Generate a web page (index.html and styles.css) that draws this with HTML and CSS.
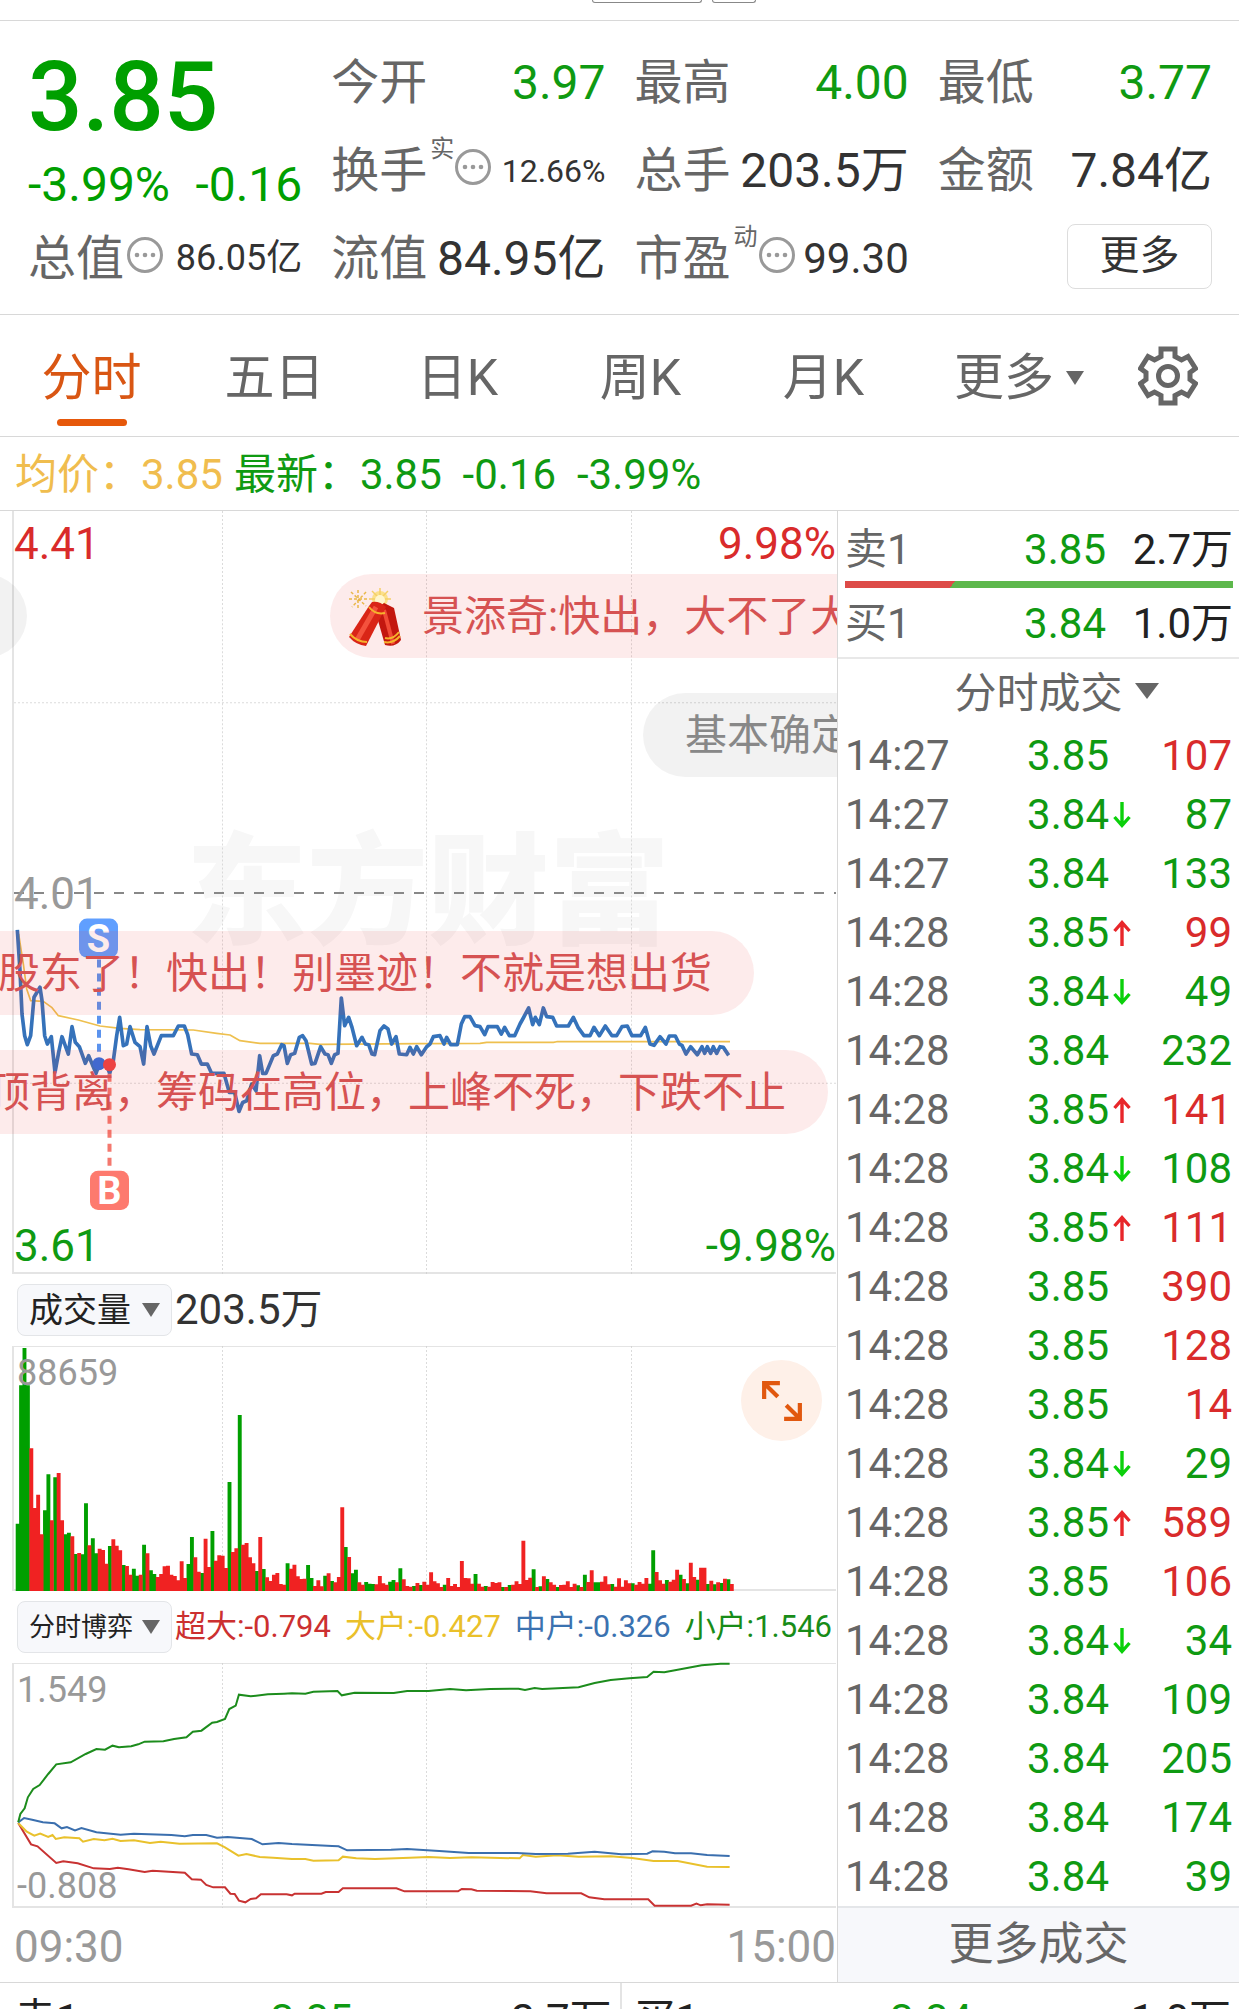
FILE: index.html
```html
<!DOCTYPE html>
<html lang="zh-CN">
<head>
<meta charset="utf-8">
<meta name="viewport" content="width=device-width, initial-scale=1">
<title>分时行情</title>
<link rel="stylesheet" href="styles.css">
</head>
<body>
<svg class="defs" aria-hidden="true">
  <symbol id="dots" viewBox="0 0 36 36"><circle cx="18" cy="18" r="16.5" fill="none" stroke="#999" stroke-width="3"/><g fill="#999"><circle cx="10" cy="18" r="2.3"/><circle cx="18" cy="18" r="2.3"/><circle cx="26" cy="18" r="2.3"/></g></symbol>
  <symbol id="down" viewBox="0 0 18 28"><path d="M9 1V24M1.500 16L9 24.500L16.500 16" fill="none" stroke="#0bd00b" stroke-width="3.400"/></symbol>
  <symbol id="up" viewBox="0 0 18 28"><path d="M9 27V4M1.500 12L9 3.500L16.500 12" fill="none" stroke="#e8262a" stroke-width="3.400"/></symbol>
</svg>

<div class="topbar"><span class="chip chip-wide"></span><span class="chip"></span></div>

<header class="quote">
  <div class="price-box">
    <strong class="price">3.85</strong>
    <div class="change"><span>-3.99%</span><span>-0.16</span></div>
  </div>
  <div class="stat"><span class="label">今开</span><span class="green">3.97</span></div>
  <div class="stat"><span class="label">最高</span><span class="green">4.00</span></div>
  <div class="stat"><span class="label">最低</span><span class="green">3.77</span></div>
  <div class="stat"><span class="label">换手<small>实</small><svg class="info"><use href="#dots"/></svg></span><span class="v-small">12.66%</span></div>
  <div class="stat"><span class="label">总手</span><span>203.5万</span></div>
  <div class="stat"><span class="label">金额</span><span>7.84亿</span></div>
  <div class="stat"><span class="label">总值<svg class="info info-gap"><use href="#dots"/></svg></span><span class="v-mid">86.05亿</span></div>
  <div class="stat"><span class="label">流值</span><span>84.95亿</span></div>
  <div class="stat"><span class="label">市盈<small>动</small><svg class="info"><use href="#dots"/></svg></span><span class="v-large">99.30</span></div>
  <div class="stat stat-end"><button class="more" type="button">更多</button></div>
</header>

<nav class="tabs">
  <button class="tab active" type="button">分时</button>
  <button class="tab" type="button">五日</button>
  <button class="tab" type="button">日K</button>
  <button class="tab" type="button">周K</button>
  <button class="tab" type="button">月K</button>
  <button class="tab" type="button">更多<svg class="caret" viewBox="0 0 18 14"><path d="M0 0H18L9 14Z"/></svg></button>
  <button class="tab tab-icon" type="button" aria-label="设置"><svg class="gear" viewBox="0 0 60 60"><path d="M23 3H37V10.500L43.500 14L50 10.500L57.500 22.500L52 26.500V33.500L57.500 37.500L50 49.500L43.500 46L37 49.500V57H23V49.500L16.500 46L10 49.500L2.500 37.500L8 33.500V26.500L2.500 22.500L10 10.500L16.500 14L23 10.500Z"/><circle cx="30" cy="30" r="9.500"/></svg></button>
</nav>

<p class="latest"><span class="avg">均价：3.85</span><span>最新：3.85&nbsp; -0.16&nbsp; -3.99%</span></p>

<main class="board">
  <section class="charts">
    <div class="plot plot-price">
      <div class="watermark">东方财富</div>
      <svg class="canvas" viewBox="0 0 822 762" preserveAspectRatio="none">
        <g class="grid"><path d="M208.500 0V762M412.500 0V762M617.500 0V762M0 191.500H822M0 571.500H822"/></g>
        <path class="mid" d="M0 381.500H822"/>
        <g transform="translate(-14 369) scale(.33333)" fill="none" stroke-linejoin="round">
          <polyline stroke="#eec04f" stroke-width="5" points="56,160 62,200 70,250 80,325 92,360 130,362 155,380 175,405 235,418 300,436 360,443 420,447 580,448 650,458 690,463 720,480 780,488 930,488 960,491 1260,489 1440,488 1460,485 1660,485 1670,483 2190,483"/>
          <polyline stroke="#3572ba" stroke-width="11" points="52,148 60,270 66,400 74,465 82,492 92,465 102,350 120,320 126,360 134,465 142,490 154,468 165,575 176,515 186,468 205,520 216,438 226,485 238,498 256,548 266,525 288,578 298,550 318,548 329,578 340,540 350,465 359,410 370,495 380,490 390,438 405,485 420,498 431,550 441,438 452,495 462,520 484,465 520,465 535,436 553,436 563,462 575,520 592,522 604,550 622,550 635,578 672,578 688,635 704,635 717,692 728,665 740,660 755,610 768,630 779,525 788,578 798,578 820,525 832,520 845,492 852,495 862,548 872,522 884,518 898,470 908,465 918,480 935,550 945,548 962,498 975,520 984,522 994,548 1004,522 1014,518 1024,352 1034,435 1046,410 1056,440 1070,495 1086,470 1096,490 1106,492 1116,520 1124,522 1140,450 1152,436 1164,445 1175,490 1188,468 1198,520 1220,522 1230,500 1240,520 1250,498 1264,522 1280,498 1290,490 1300,468 1320,465 1332,490 1340,470 1352,492 1372,492 1384,430 1394,408 1410,408 1425,435 1440,438 1454,462 1464,438 1492,438 1504,460 1514,440 1528,465 1544,465 1560,430 1570,412 1586,382 1598,432 1606,410 1618,432 1630,382 1640,408 1658,410 1670,436 1705,436 1720,410 1734,440 1752,465 1770,465 1782,440 1798,465 1816,436 1836,465 1850,465 1866,438 1882,436 1896,465 1922,465 1936,440 1950,490 1962,494 1980,468 1998,490 2008,466 2026,466 2038,490 2046,494 2058,520 2072,498 2092,522 2106,498 2114,518 2122,498 2132,518 2140,498 2150,518 2160,498 2170,500 2186,524"/>
        </g>
        <path d="M85 448V545" stroke="#5b93ee" stroke-width="4" stroke-dasharray="8 6"/>
        <path d="M95.500 562V658" stroke="#f4786e" stroke-width="4" stroke-dasharray="8 6"/>
        <circle cx="85" cy="552" r="6.500" fill="#2f6fe0"/>
        <circle cx="95.500" cy="553" r="6.500" fill="#ee4444"/>
        <rect x="65" y="407" width="39" height="39" rx="8" fill="#609fff"/>
        <rect x="76" y="659" width="39" height="39" rx="8" fill="#fd7a6e"/>
        <g class="mark"><text x="84.500" y="440">S</text><text x="95.500" y="692">B</text></g>
      </svg>
      <span class="tag tag-top">4.41</span>
      <span class="tag tag-top tag-right">9.98%</span>
      <span class="tag tag-mid">4.01</span>
      <span class="tag tag-bottom">3.61</span>
      <span class="tag tag-bottom tag-right">-9.98%</span>
      <div class="bubble lane-1 grey off-left"></div>
      <div class="bubble lane-1 from-1">
        <svg class="cracker" viewBox="0 0 54 60">
          <g stroke="#e9b84a" stroke-width="1.500" stroke-dasharray="3 2"><path d="M10 2V20M1 11H21M3 4L18 18M18 4L4 19"/></g>
          <circle cx="32" cy="11" r="8" fill="#fbe08a"/><path d="M32 0V22M21 11H43M24 3L40 19M40 3L24 19" stroke="#f5d067" stroke-width="1.500"/><circle cx="32" cy="12" r="5" fill="#fff6cd"/>
          <path d="M36 15L46 20L53 52Q47 60 37 57L27 22Z" fill="#c3170f"/><path d="M36 22L45 56" stroke="#f14a36" stroke-width="4"/>
          <path d="M24 14Q32 13 38 19L18 58Q8 57 1 49L21 18Z" fill="#d92517"/><path d="M28 19L9 52" stroke="#f4523d" stroke-width="5"/>
          <path d="M21 19Q27 27 37 25M2 46Q9 54 19 54M36 54Q45 56 52 48M37 50Q45 52 51 44" fill="none" stroke="#f5b32c" stroke-width="2"/>
        </svg>景添奇:快出，大不了大</div>
      <div class="bubble lane-2 grey from-2">基本确定</div>
      <div class="bubble lane-3 to-3">股东了！快出！别墨迹！不就是想出货</div>
      <div class="bubble lane-4 to-4">顶背离，筹码在高位，上峰不死，下跌不止</div>
    </div>

    <div class="tools">
      <button class="picker" type="button">成交量<svg class="caret" viewBox="0 0 18 14"><path d="M0 0H18L9 14Z"/></svg></button>
      <span class="total">203.5万</span>
    </div>
    <div class="plot plot-sub">
      <svg class="canvas" viewBox="0 0 822 245" preserveAspectRatio="none">
        <g class="grid"><path d="M208.500 0V245M412.500 0V245M617.500 0V245"/></g>
        <path id="vol-down" fill="#009f00"/><path id="vol-up" fill="#f02222"/>
      </svg>
      <span class="tag tag-sub-top">88659</span>
      <button class="expand" type="button" aria-label="全屏"><svg viewBox="0 0 40 40"><path d="M3 18V3H18M3 3L16 16M37 22V37H22M37 37L24 24" fill="none" stroke="#e1580f" stroke-width="4"/></svg></button>
    </div>

    <div class="tools">
      <button class="picker picker-long" type="button">分时博弈<svg class="caret" viewBox="0 0 18 14"><path d="M0 0H18L9 14Z"/></svg></button>
      <p class="legend"><span class="c-super">超大:-0.794</span><span class="c-big">大户:-0.427</span><span class="c-medium">中户:-0.326</span><span class="c-small">小户:1.546</span></p>
    </div>
    <div class="plot plot-sub">
      <svg class="canvas" viewBox="0 0 822 245" preserveAspectRatio="none">
        <g class="grid"><path d="M208.500 0V245M412.500 0V245M617.500 0V245"/></g>
        <g class="flows" transform="translate(-14 -24) scale(.53571 .33333)">
          <polyline stroke="#c83232" points="34,552 58,616 70,622 105,672 118,667 145,673 175,688 205,690 220,686 240,691 270,699 285,695 345,701 358,721 375,722 385,738 398,745 420,745 430,764 438,765 446,785 458,790 468,780 478,778 487,766 535,766 545,769 550,764 600,764 608,759 632,759 640,748 740,748 755,757 855,757 862,750 880,751 890,755 990,757 1020,763 1085,763 1100,775 1128,781 1210,781 1222,800 1290,800 1300,794 1308,799 1320,796 1362,797"/>
          <polyline stroke="#e9c12c" points="34,552 50,578 64,590 75,584 90,594 98,588 104,600 120,595 148,598 155,608 175,600 195,604 210,599 225,606 250,604 280,612 300,608 335,614 405,613 420,625 445,650 460,645 485,654 510,656 545,660 570,660 585,665 632,664 640,653 665,658 700,660 765,656 800,654 840,657 880,655 970,658 976,648 1000,653 1040,649 1080,653 1140,652 1180,657 1220,666 1265,666 1320,683 1362,684"/>
          <polyline stroke="#3b6fae" points="34,550 45,537 60,542 80,550 102,553 115,568 125,564 140,574 152,567 180,580 225,587 250,584 320,588 345,592 360,588 385,588 405,596 425,594 470,600 490,616 520,612 545,615 620,621 632,622 648,634 730,632 760,630 820,636 875,642 965,642 1000,645 1060,644 1110,638 1160,646 1208,644 1218,637 1240,638 1260,643 1290,643 1320,648 1362,651"/>
          <polyline stroke="#1c8c1c" points="34,550 38,525 46,508 52,475 62,450 74,438 90,405 105,376 132,370 160,345 180,330 196,332 210,320 222,325 245,322 258,316 270,308 305,307 325,300 348,295 360,278 376,275 396,251 405,249 420,240 428,210 440,200 446,167 468,172 500,166 530,164 545,163 570,164 585,158 630,156 638,169 662,161 735,162 760,156 800,156 840,150 870,154 915,150 968,149 980,153 998,147 1012,150 1080,145 1110,132 1140,123 1175,118 1208,114 1220,98 1240,100 1290,85 1310,79 1345,74 1362,74"/>
        </g>
      </svg>
      <span class="tag tag-sub-top">1.549</span>
      <span class="tag tag-sub-bottom">-0.808</span>
    </div>
    <div class="times"><span>09:30</span><span>15:00</span></div>
  </section>

  <aside class="side">
    <div class="book">
      <div class="level"><span class="label">卖1</span><span class="green">3.85</span><span>2.7万</span></div>
      <div class="ratio"></div>
      <div class="level level-buy"><span class="label">买1</span><span class="green">3.84</span><span>1.0万</span></div>
    </div>
    <button class="ticks-title" type="button">分时成交<svg class="caret" viewBox="0 0 24 16"><path d="M0 0H24L12 16Z"/></svg></button>
    <table class="ticks"><tbody id="ticks"></tbody></table>
    <button class="ticks-more" type="button">更多成交</button>
  </aside>
</main>

<footer class="bottom">
  <div><span>卖1</span><span class="green">3.85</span><span>2.7万</span></div>
  <div><span>买1</span><span class="green">3.84</span><span>1.0万</span></div>
</footer>
<script src="script.js"></script>
</body>
</html>
```
FILE: styles.css
```css
* { box-sizing: border-box; margin: 0; padding: 0; }
body {
  height: 100vh;
  overflow: hidden;
  background: #fff;
  color: #333;
  font-family: Roboto, "Noto Sans CJK SC", sans-serif;
  font-size: 48px;
  line-height: 1.2;
  white-space: nowrap;
}
button { font: inherit; color: inherit; background: none; border: 0; }
svg { display: block; flex: none; }
.defs { position: absolute; width: 0; height: 0; }
.green { color: #0f9a12; }
.label { color: #666; }
.caret { width: 18px; height: 14px; fill: #666; }

.topbar { display: flex; gap: 10px; height: 21px; padding-left: 592px; border-bottom: 1px solid #d8d8d8; }
.chip { width: 44px; height: 3px; border: 1px solid #888; border-top: 0; border-radius: 0 0 6px 6px; }
.chip-wide { width: 110px; }

.quote {
  display: grid;
  grid-template-columns: repeat(4, 1fr);
  grid-auto-rows: 88px;
  column-gap: 29px;
  padding: 18px 27px 11px 28px;
  border-bottom: 1px solid #d8d8d8;
}
.price-box { grid-row: span 2; color: #009f00; padding-top: 8px; }
.price { display: block; font-size: 96px; font-weight: 500; line-height: 100px; }
.change { display: flex; justify-content: space-between; line-height: 76px; }
.stat { display: flex; align-items: center; justify-content: space-between; }
.stat-end { justify-content: flex-end; }
.stat .label { display: flex; align-items: center; }
.stat small { font-size: 24px; padding: 0 1px 44px 3px; }
.info { width: 36px; height: 36px; margin-bottom: 8px; }
.info-gap { margin-left: 3px; }
.v-small { font-size: 32px; }
.v-mid { font-size: 36px; }
.v-large { font-size: 42px; }
.more { width: 145px; height: 65px; margin-bottom: 6px; border: 1px solid #ddd; border-radius: 8px; font-size: 40px; line-height: 62px; }

.tabs {
  display: grid;
  grid-template-columns: repeat(5, 183fr) 208fr 90fr;
  height: 122px;
  padding-right: 26px;
  border-bottom: 1px solid #d8d8d8;
  color: #666;
  font-size: 50px;
}
.tab { display: flex; align-items: center; justify-content: center; gap: 12px; position: relative; padding-top: 4px; }
.tab-icon { padding-top: 0; }
.active { color: #d95613; }
.active::after { content: ""; position: absolute; bottom: 10px; width: 70px; height: 7px; border-radius: 4px; background: #e6580b; }
.gear { width: 60px; height: 60px; fill: none; stroke: #666; stroke-width: 5; }

.latest { display: flex; gap: 11px; height: 74px; padding-left: 15px; border-bottom: 1px solid #d8d8d8; color: #0f9a12; font-size: 42px; line-height: 75px; }
.avg { color: #f0bd4e; }

.board { display: grid; grid-template-columns: 1fr 402px; border-bottom: 1px solid #d8d8d8; }
.charts { min-width: 0; }
.plot { position: relative; padding: 0 1px 0 12px; }
.plot-price { overflow: hidden; height: 763px; }
.plot-sub { height: 245px; }
.canvas { position: relative; width: 100%; height: 100%; border-left: 2px solid #e4e4e4; box-shadow: inset 0 -2px #e4e4e4; }
.plot-sub .canvas { box-shadow: inset 0 -2px #e4e4e4, inset 0 1px #e4e4e4; overflow: visible; }
.grid { stroke: #ccc; stroke-width: 1; stroke-dasharray: 2 2; fill: none; opacity: .7; }
.mid { stroke: #888; stroke-width: 2; stroke-dasharray: 10 10; }
.mark { fill: #fff; font-size: 38px; font-weight: 700; text-anchor: middle; }
.flows { fill: none; stroke-width: 2; }
.flows polyline { vector-effect: non-scaling-stroke; }
.watermark { position: absolute; top: 310px; left: 186px; color: #f7f7f7; font-size: 121px; font-weight: 900; line-height: 144px; }
.tag { position: absolute; left: 14px; color: #999; font-size: 44px; line-height: 52px; }
.tag-top { top: 7px; color: #d92b2b; }
.tag-mid { top: 357px; }
.tag-bottom { bottom: 2px; color: #0f9a12; }
.tag-right { left: auto; right: 1px; }
.tag-sub-top { top: 5px; left: 17px; font-size: 36px; line-height: 44px; }
.tag-sub-bottom { bottom: 0; left: 17px; font-size: 36px; line-height: 44px; }

.bubble {
  position: absolute;
  display: flex;
  align-items: center;
  gap: 20px;
  height: 84px;
  padding: 3px 42px 0;
  border-radius: 42px;
  background: rgba(240, 60, 60, .1);
  color: #d65252;
  font-size: 42px;
}
.bubble.grey { background: rgba(0, 0, 0, .05); color: #888; }
.lane-1 { top: 63px; }
.lane-2 { top: 182px; }
.lane-3 { top: 420px; }
.lane-4 { top: 539px; }
.off-left { right: 810px; width: 200px; }
.from-1 { left: 330px; padding-left: 18px; }
.from-2 { left: 643px; }
.to-3 { right: 83px; }
.to-4 { right: 9px; }
.cracker { width: 54px; height: 60px; }

.tools { display: flex; align-items: center; height: 72px; padding: 0 5px 0 17px; gap: 3px; }
.picker { display: flex; align-items: center; justify-content: space-between; width: 155px; height: 52px; padding: 0 11px; border: 1px solid #e3e5e8; border-radius: 8px; background: #f7f8fb; color: #222; font-size: 34px; line-height: 50px; }
.picker-long { font-size: 26px; }
.total { font-size: 42px; }
.legend { display: flex; flex: 1; justify-content: space-between; font-size: 31px; }
.c-super { color: #cc3030; }
.c-big { color: #eac02a; }
.c-medium { color: #3b72b0; }
.c-small { color: #188c18; }
.expand { position: absolute; top: 14px; right: 15px; display: grid; place-items: center; width: 81px; height: 81px; border-radius: 50%; background: #fef0e8; }
.expand svg { width: 42px; height: 42px; }
.times { display: flex; justify-content: space-between; padding: 0 1px 0 14px; color: #999; font-size: 44px; line-height: 78px; height: 74px; }

.side { display: flex; flex-direction: column; border-left: 1px solid #d8d8d8; font-size: 42px; }
.book { padding: 6px 6px 0 7px; border-bottom: 2px solid #e8e8e8; color: #222; }
.level { display: grid; grid-template-columns: 140px 121px 1fr; line-height: 65px; height: 64px; text-align: right; }
.level .label { text-align: left; }
.level-buy { height: 69px; line-height: 72px; }
.ratio { height: 7px; background: linear-gradient(130deg, #dd4b48 28%, #5db84c 28%); }
.ticks-title { display: flex; align-items: center; justify-content: center; gap: 12px; height: 67px; padding: 3px 0 0 36px; color: #666; }
.ticks-title .caret { width: 24px; height: 16px; margin-bottom: 6px; }
.ticks { width: 387px; margin-left: 7px; table-layout: fixed; border-collapse: collapse; text-align: right; }
.ticks td { height: 59px; line-height: 58px; color: #0f9a12; }
.ticks .time { width: 140px; text-align: left; color: #666; }
.ticks .deal { width: 124px; }
.ticks .dir { width: 24px; padding-left: 4px; }
.ticks .dir svg { width: 18px; height: 28px; }
.ticks .buy { color: #d92b2b; }
.ticks-more { flex: 1; min-height: 75px; border-top: 2px solid #e4e6e9; background: #f7f8fb; color: #666; font-size: 45px; line-height: 74px; }

.bottom { display: grid; grid-template-columns: 1fr 1fr; font-size: 42px; line-height: 50px; color: #222; }
.bottom div { display: grid; grid-template-columns: 150fr 190fr 260fr; height: 90px; padding: 12px 8px 0 14px; text-align: right; }
.bottom div + div { border-left: 2px solid #e4e4e4; padding-left: 12px; }
.bottom span:first-child { text-align: left; }
```
FILE: script.js
```js
// One entry per minute: g = falling, r = rising, then the bar height in thirds of a unit.
const volume = `g202 g617 g729 g617 r428 r249 r289 r170 g242 g350 r212 g341 r354 r212 g170 g175 r164 g111 r114 g110 g263 r137 g158 g113 r127 r123 r82 g135 r155 r136 r122 g78 r75 r49 g67 g46 r49 g139 r113 g62 g51 r42 r51 r74 r76 r49 r45 r32 r89 r39 g81 g162 r101 r58 g54 r157 r72 g180 r91 r107 r106 r69 g327 r117 r128 g528 r139 r144 r101 r83 g60 r162 g66 r41 r30 r49 r54 r21 r19 g83 r67 r79 r44 r36 r37 g78 g39 r15 r32 r14 g46 r53 g30 r26 r42 r251 g132 r102 g53 g64 r26 r19 g27 g22 g21 r20 r45 r23 r19 g28 g33 r26 g68 r35 r15 r13 g15 r24 g18 r28 r19 r56 r29 r23 r12 g19 r39 r15 r21 r12 r90 r39 r38 r22 g51 r22 r13 g15 r13 r27 r24 r26 g12 r12 g18 r19 r29 r21 r151 r33 r40 g65 r12 g14 r44 g36 r26 r19 g12 r18 r19 r29 r12 r22 g17 r12 g49 r27 r62 g26 g26 r28 r44 r20 g21 r13 r38 r13 r32 r23 g23 r19 r27 r22 r39 g22 g122 r57 r32 r22 g33 r28 r34 r64 g49 r36 g23 r85 r42 g34 r70 r70 g21 r31 g20 r26 g24 r37 g35 r21`.split(' ');
const paths = { g: '', r: '' };
volume.forEach((entry, i) => {
  const x = (1.7 + i * 3.417).toFixed(2);
  const h = (entry.slice(1) / 3).toFixed(1);
  paths[entry[0]] += `M${x} 245v-${h}h3.9v${h}z`;
});
document.getElementById('vol-down').setAttribute('d', paths.g);
document.getElementById('vol-up').setAttribute('d', paths.r);

const ticks = [
  ['14:27', '3.85', '', 107, 1], ['14:27', '3.84', 'down', 87, 0], ['14:27', '3.84', '', 133, 0],
  ['14:28', '3.85', 'up', 99, 1], ['14:28', '3.84', 'down', 49, 0], ['14:28', '3.84', '', 232, 0],
  ['14:28', '3.85', 'up', 141, 1], ['14:28', '3.84', 'down', 108, 0], ['14:28', '3.85', 'up', 111, 1],
  ['14:28', '3.85', '', 390, 1], ['14:28', '3.85', '', 128, 1], ['14:28', '3.85', '', 14, 1],
  ['14:28', '3.84', 'down', 29, 0], ['14:28', '3.85', 'up', 589, 1], ['14:28', '3.85', '', 106, 1],
  ['14:28', '3.84', 'down', 34, 0], ['14:28', '3.84', '', 109, 0], ['14:28', '3.84', '', 205, 0],
  ['14:28', '3.84', '', 174, 0], ['14:28', '3.84', '', 39, 0]
];
document.getElementById('ticks').innerHTML = ticks.map(([time, price, dir, count, buy]) =>
  `<tr><td class="time">${time}</td><td class="deal">${price}</td><td class="dir">${dir && `<svg><use href="#${dir}"/></svg>`}</td><td class="${buy ? 'buy' : ''}">${count}</td></tr>`
).join('');
```
